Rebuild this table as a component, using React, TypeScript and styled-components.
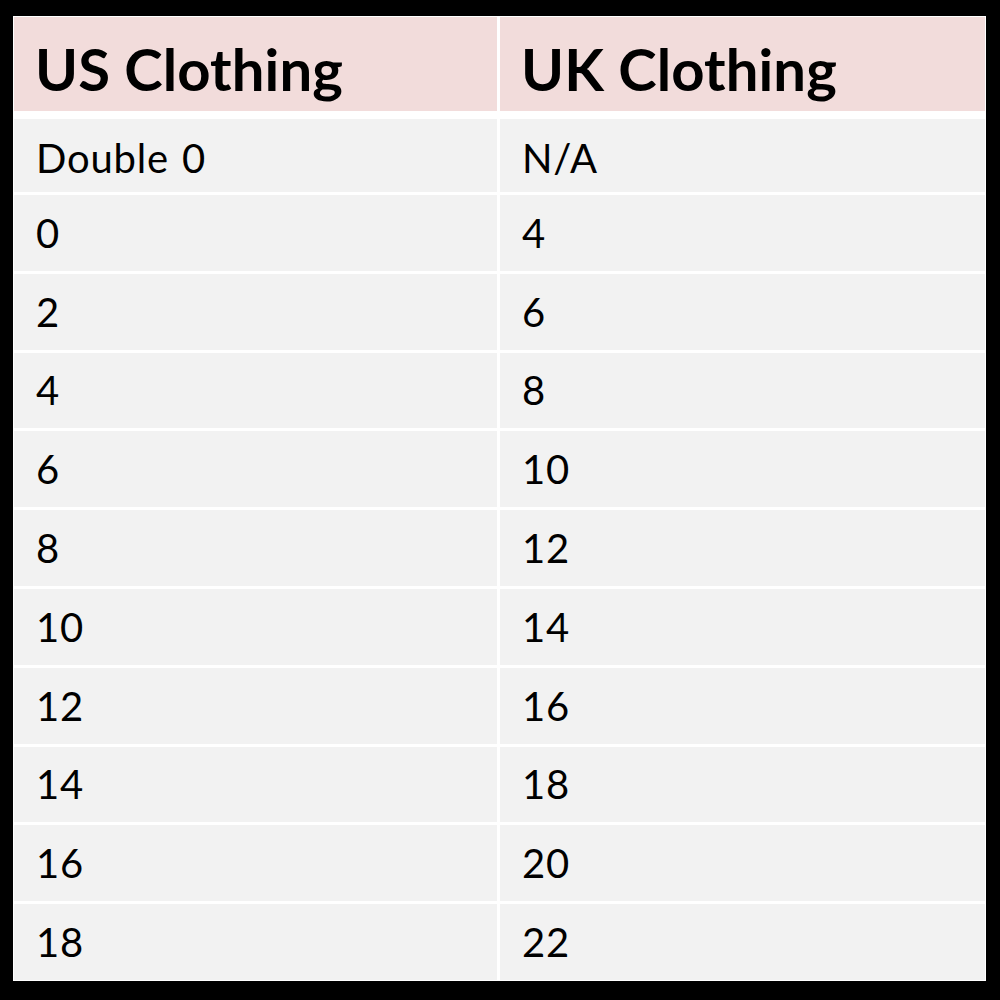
import React from "react";
import styled, { createGlobalStyle } from "styled-components";

const GlobalStyle = createGlobalStyle`
  html, body {
    margin: 0;
    padding: 0;
    background: #000;
  }
  body {
    font-family: Lato, "Open Sans", "Liberation Sans", sans-serif;
  }
`;

const Page = styled.div`
  width: 1000px;
  height: 1000px;
  box-sizing: border-box;
  background: #000;
  padding: 16px 14px 19px 13px;
  display: flex;
`;

const Table = styled.div`
  flex: 1;
  background: #ffffff;
  padding: 1px;
  display: flex;
  flex-direction: column;
  gap: 8px;
`;

const HeaderRow = styled.div`
  height: 94px;
  display: grid;
  grid-template-columns: 483px 1fr;
  column-gap: 3px;
`;

const HeaderCell = styled.div`
  background: #f2dcdb;
  display: flex;
  align-items: center;
  padding: 8px 0 0 21px;
  font-family: Lato, "Open Sans", "Liberation Sans", sans-serif;
  font-weight: 700;
  font-size: 58px;
  color: #000;
  letter-spacing: 0.1px;
`;

const Body = styled.div`
  flex: 1;
  display: grid;
  grid-template-columns: 483px 1fr;
  grid-template-rows: 73px repeat(10, 1fr);
  column-gap: 3px;
  row-gap: 3px;
`;

const Cell = styled.div<{ $first?: boolean }>`
  background: #f2f2f2;
  display: flex;
  align-items: center;
  padding: ${(p) => (p.$first ? "5px" : "0")} 0 0 22px;
  font-family: Lato, "Open Sans", "Liberation Sans", sans-serif;
  font-weight: 400;
  font-size: 40px;
  color: #000;
  letter-spacing: 0.8px;
  word-spacing: 2px;
`;

const rows: [string, string][] = [
  ["Double 0", "N/A"],
  ["0", "4"],
  ["2", "6"],
  ["4", "8"],
  ["6", "10"],
  ["8", "12"],
  ["10", "14"],
  ["12", "16"],
  ["14", "18"],
  ["16", "20"],
  ["18", "22"],
];

export default function App() {
  return (
    <>
      <GlobalStyle />
      <Page>
        <Table>
          <HeaderRow>
            <HeaderCell>US Clothing</HeaderCell>
            <HeaderCell>UK Clothing</HeaderCell>
          </HeaderRow>
          <Body>
            {rows.map(([us, uk], i) => (
              <React.Fragment key={i}>
                <Cell $first={i === 0}>{us}</Cell>
                <Cell $first={i === 0}>{uk}</Cell>
              </React.Fragment>
            ))}
          </Body>
        </Table>
      </Page>
    </>
  );
}
